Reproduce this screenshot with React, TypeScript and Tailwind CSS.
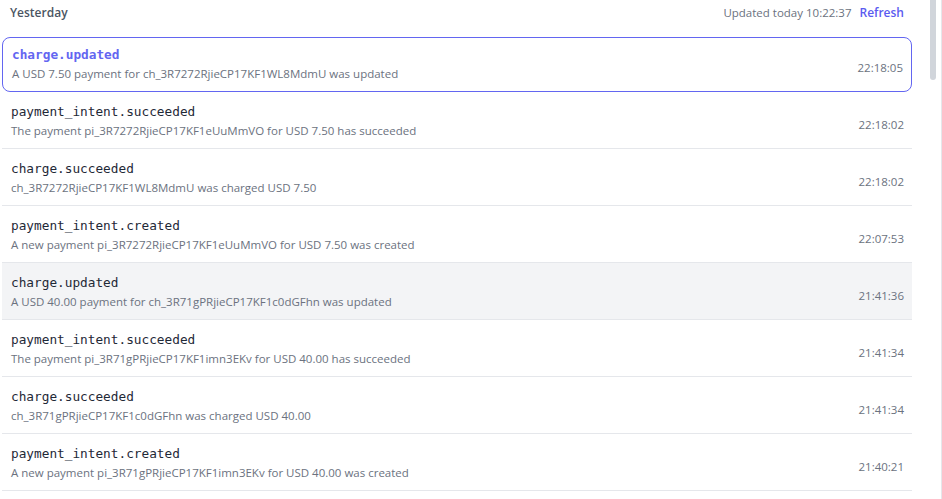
import React from 'react'

type EventRow = {
  type: string
  description: string
  time: string
}

const events: EventRow[] = [
  { type: 'charge.updated', description: 'A USD 7.50 payment for ch_3R7272RjieCP17KF1WL8MdmU was updated', time: '22:18:05' },
  { type: 'payment_intent.succeeded', description: 'The payment pi_3R7272RjieCP17KF1eUuMmVO for USD 7.50 has succeeded', time: '22:18:02' },
  { type: 'charge.succeeded', description: 'ch_3R7272RjieCP17KF1WL8MdmU was charged USD 7.50', time: '22:18:02' },
  { type: 'payment_intent.created', description: 'A new payment pi_3R7272RjieCP17KF1eUuMmVO for USD 7.50 was created', time: '22:07:53' },
  { type: 'charge.updated', description: 'A USD 40.00 payment for ch_3R71gPRjieCP17KF1c0dGFhn was updated', time: '21:41:36' },
  { type: 'payment_intent.succeeded', description: 'The payment pi_3R71gPRjieCP17KF1imn3EKv for USD 40.00 has succeeded', time: '21:41:34' },
  { type: 'charge.succeeded', description: 'ch_3R71gPRjieCP17KF1c0dGFhn was charged USD 40.00', time: '21:41:34' },
  { type: 'payment_intent.created', description: 'A new payment pi_3R71gPRjieCP17KF1imn3EKv for USD 40.00 was created', time: '21:40:21' },
]

function Row({ event, selected, hovered }: { event: EventRow; selected?: boolean; hovered?: boolean }) {
  const base = selected
    ? 'rounded-lg border border-[#6366f1] pt-[7px] pb-[8px]'
    : hovered
      ? 'border-b border-[#e5e7eb] bg-[#f3f4f6] pt-[10px] pb-[8px]'
      : 'border-b border-[#e5e7eb] pt-[10px] pb-[8px]'

  return (
    <div className={`flex items-center justify-between pl-[9px] pr-[8px] ${base}`}>
      <div className="min-w-0">
        <div
          className={`font-['DejaVu_Sans_Mono',monospace] text-[12.75px] leading-[20px] ${
            selected ? 'font-bold text-[#6366f1]' : 'text-[#1f2937]'
          }`}
        >
          {event.type}
        </div>
        <div className="text-[11.5px] leading-[18px] text-[#6b7280]">{event.description}</div>
      </div>
      <div className="mt-[7px] text-[11.5px] text-[#6b7280]">{event.time}</div>
    </div>
  )
}

export default function App() {
  return (
    <div className="flex h-[499px] w-[942px] overflow-hidden bg-white font-['Open_Sans',sans-serif]">
      <div className="w-[912px] pl-[2px]">
        <div className="flex h-[37px] items-start justify-between pl-[8px] pr-[8px] pt-[4px]">
          <span className="text-[12px] font-semibold text-[#4b5563]">Yesterday</span>
          <div className="flex items-center gap-[8px] text-[11.5px]">
            <span className="text-[#6b7280]">Updated today 10:22:37</span>
            <button className="text-[12px] font-semibold text-[#5b5bf0]">Refresh</button>
          </div>
        </div>
        {events.map((e, i) => (
          <Row key={i} event={e} selected={i === 0} hovered={i === 4} />
        ))}
      </div>
      <div className="ml-[18px] flex w-[12px] border-r border-[#e5e7eb]">
        <div className="h-[80px] w-[6px] rounded-b-full bg-[#d1d5db]" />
      </div>
    </div>
  )
}
